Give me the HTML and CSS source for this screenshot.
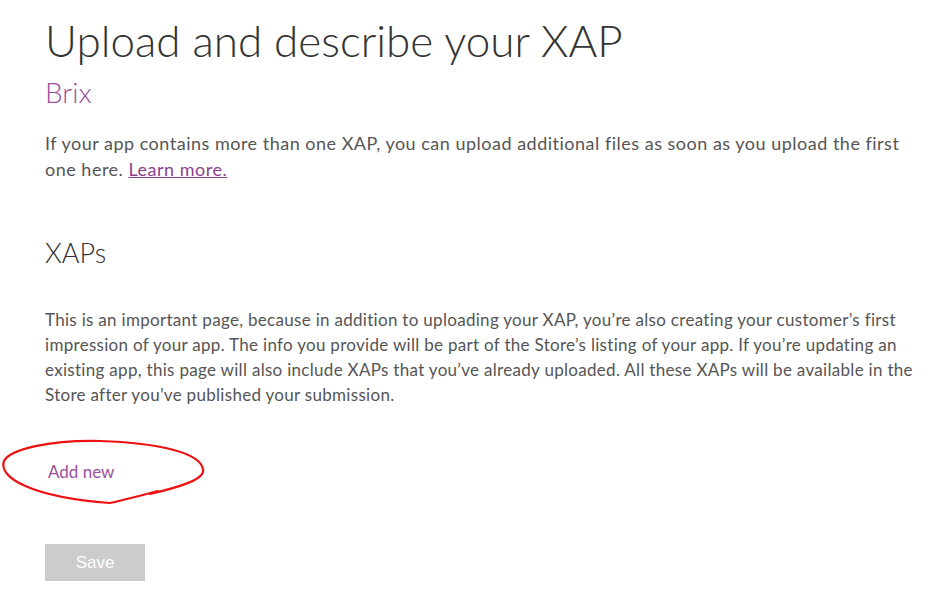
FILE: index.html
```html
<!DOCTYPE html>
<html>
<head>
<meta charset="utf-8">
<link rel="stylesheet" href="styles.css">
</head>
<body>
<div class="page">
  <h1 class="title">Upload and describe your XAP</h1>
  <div class="app-name">Brix</div>
  <p class="intro">If your app contains more than one XAP, you can upload additional files as soon as you upload the first one here. <a href="#" class="link">Learn more.</a></p>
  <h2 class="section">XAPs</h2>
  <p class="desc">This is an important page, because in addition to uploading your XAP, you’re also creating your customer’s first impression of your app. The info you provide will be part of the Store’s listing of your app. If you’re updating an existing app, this page will also include XAPs that you’ve already uploaded. All these XAPs will be available in the Store after you’ve published your submission.</p>
  <div class="add-wrap">
    <a href="#" class="add-new">Add new</a>
    <svg class="circle" width="210" height="72" viewBox="0 0 210 72">
      <path d="M150 55 C 180 48, 206 40, 203 30 C 200 14, 160 4, 100 2 C 50 1, 10 10, 4 22 C -2 38, 30 58, 110 64 C 120 62, 135 58, 158 52" fill="none" stroke="#ee1111" stroke-width="2.2" stroke-linecap="round"/>
    </svg>
  </div>
  <button class="save">Save</button>
</div>
</body>
</html>
```
FILE: styles.css
```css
html, body {
  margin: 0;
  padding: 0;
  background: #ffffff;
}
.page {
  padding: 13px 0 0 45px;
  font-family: "Lato", "Liberation Sans", sans-serif;
  color: #555555;
}
.title {
  margin: 0;
  font-family: "Lato", sans-serif;
  font-weight: 300;
  font-size: 44px;
  line-height: 54px;
  color: #333333;
}
.app-name {
  margin-top: 8px;
  font-size: 28px;
  font-weight: 300;
  line-height: 34px;
  color: #9b4f9b;
}
.intro {
  margin: 21px 0 0 0;
  font-size: 18px;
  line-height: 26px;
  letter-spacing: 0.5px;
  width: 870px;
}
.link {
  color: #8c3f8e;
  text-decoration: underline;
}
.section {
  margin: 54px 0 0 0;
  font-size: 27px;
  font-weight: 300;
  line-height: 34px;
  color: #333333;
}
.desc {
  margin: 37px 0 0 0;
  font-size: 17px;
  line-height: 25px;
  letter-spacing: 0.3px;
  width: 880px;
}
.add-wrap {
  position: relative;
  margin-top: 52px;
  height: 30px;
}
.add-new {
  display: inline-block;
  margin-left: 3px;
  font-size: 17px;
  line-height: 26px;
  color: #9b4f9b;
  text-decoration: none;
}
.circle {
  position: absolute;
  left: -45px;
  top: -20px;
}
.save {
  display: block;
  margin-top: 55px;
  width: 100px;
  height: 37px;
  border: none;
  background: #cccccc;
  color: #ffffff;
  font-family: "Liberation Sans", Arial, sans-serif;
  font-size: 17px;
  padding: 0;
}
```
